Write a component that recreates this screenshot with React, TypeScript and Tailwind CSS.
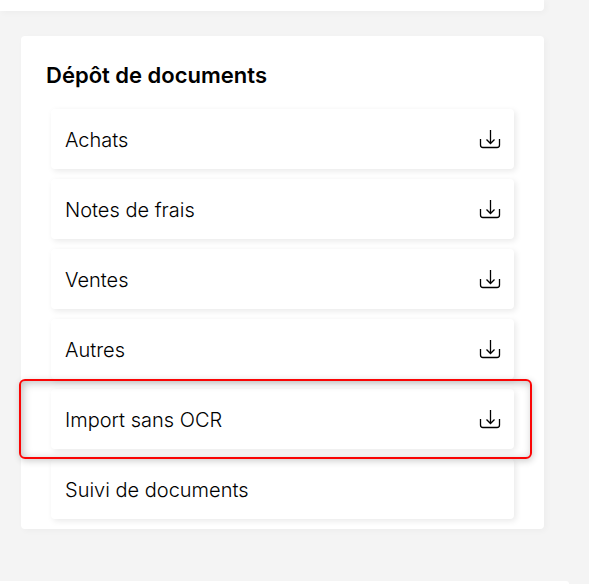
type DepositItem = {
  label: string;
  upload: boolean;
  highlighted?: boolean;
};

const items: DepositItem[] = [
  { label: 'Achats', upload: true },
  { label: 'Notes de frais', upload: true },
  { label: 'Ventes', upload: true },
  { label: 'Autres', upload: true },
  { label: 'Import sans OCR', upload: true, highlighted: true },
  { label: 'Suivi de documents', upload: false },
];

function DownloadTrayIcon() {
  return (
    <svg width="22" height="20" viewBox="0 0 22 20" fill="none" stroke="black" aria-hidden="true">
      <path d="M1.5 10v6a2.5 2.5 0 0 0 2.5 2.5h14a2.5 2.5 0 0 0 2.5-2.5v-6" strokeWidth="1.3" />
      <path d="M11.5 1v13.5M7.5 10.5l4 4 4-4" strokeWidth="1.3" />
    </svg>
  );
}

function DepositRow({ item }: { item: DepositItem }) {
  return (
    <li className="relative">
      <button
        type="button"
        className="flex h-[60px] w-full items-center justify-between rounded bg-white pr-[13px] pl-3.5 text-left text-xl font-light text-black shadow-[2px_2px_6px_rgba(0,0,0,0.09)]"
      >
        <span className="pt-0.5">{item.label}</span>
        {item.upload && <DownloadTrayIcon />}
      </button>
      {item.highlighted && (
        <div className="pointer-events-none absolute -top-2.5 -right-[18px] -bottom-2.5 -left-8 z-10 rounded-md border-2 border-[#fa0505] shadow-[1px_2px_7px_rgba(0,0,0,0.2),inset_2px_2px_8px_rgba(0,0,0,0.25)]" />
      )}
    </li>
  );
}

export default function App() {
  return (
    <main className="flex min-h-screen flex-col overflow-hidden bg-[#f4f4f4] font-['Inter',sans-serif] text-black">
      <div className="mr-[45px] h-[11px] rounded-br-sm bg-white shadow-[2px_2px_6px_rgba(0,0,0,0.03)]" />

      <section className="mt-[25px] mr-[45px] ml-[21px] rounded-sm bg-white pr-[30px] pb-2.5 pl-[25px] shadow-[2px_2px_6px_rgba(0,0,0,0.03)]">
        <h2 className="pt-[25px] text-[22px] leading-7 font-semibold">Dépôt de documents</h2>
        <ul className="mt-5 ml-[5px] flex flex-col gap-2.5">
          {items.map((item) => (
            <DepositRow key={item.label} item={item} />
          ))}
        </ul>
      </section>

      <div className="mt-[52px] mr-5 h-[3px] rounded-tr-sm bg-white" />
    </main>
  );
}
